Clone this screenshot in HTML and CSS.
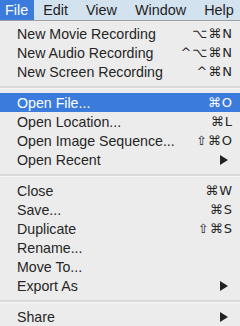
FILE: index.html
```html
<!DOCTYPE html>
<html lang="en">
<head>
    <meta charset="UTF-8">
    <title>File Menu</title>
    <link rel="stylesheet" href="styles.css">
</head>
<body>
    <div class="menubar">
        <span class="bar-item active">File</span>
        <span class="bar-item">Edit</span>
        <span class="bar-item">View</span>
        <span class="bar-item">Window</span>
        <span class="bar-item">Help</span>
    </div>

    <div class="menu">
        <div class="row"><span>New Movie Recording</span><span class="key">⌥⌘N</span></div>
        <div class="row"><span>New Audio Recording</span><span class="key">^⌥⌘N</span></div>
        <div class="row"><span>New Screen Recording</span><span class="key">^⌘N</span></div>

        <div class="sep"></div>

        <div class="row selected"><span>Open File...</span><span class="key">⌘O</span></div>
        <div class="row"><span>Open Location...</span><span class="key">⌘L</span></div>
        <div class="row"><span>Open Image Sequence...</span><span class="key">⇧⌘O</span></div>
        <div class="row"><span>Open Recent</span><span class="arrow"></span></div>

        <div class="sep"></div>

        <div class="row"><span>Close</span><span class="key">⌘W</span></div>
        <div class="row"><span>Save...</span><span class="key">⌘S</span></div>
        <div class="row"><span>Duplicate</span><span class="key">⇧⌘S</span></div>
        <div class="row"><span>Rename...</span></div>
        <div class="row"><span>Move To...</span></div>
        <div class="row"><span>Export As</span><span class="arrow"></span></div>

        <div class="sep"></div>

        <div class="row"><span>Share</span><span class="arrow"></span></div>
    </div>
</body>
</html>
```

FILE: styles.css
```css
* {
    margin: 0;
    padding: 0;
    box-sizing: border-box;
}

body {
    font-family: "Liberation Sans", "DejaVu Sans", Arial, sans-serif;
    font-size: 14.2px;
    color: #262626;
    background: #ececec;
    width: 240px;
    height: 326px;
    overflow: hidden;
}

.menubar {
    display: flex;
    height: 21px;
    background: #d3e2ef;
    border-bottom: 1px solid #9c9fa3;
    white-space: nowrap;
    font-size: 14.4px;
}

.bar-item {
    padding: 0 9px;
    line-height: 20px;
    color: #1e1e1e;
}

.bar-item.active {
    padding: 0 6px 0 5px;
    background: #3a7bdc;
    color: #fff;
}

.bar-item:last-child {
    padding-right: 0;
}

.menu {
    padding-top: 3px;
    background: #ececec;
}

.row {
    display: flex;
    align-items: center;
    justify-content: space-between;
    height: 19px;
    padding: 0 8px 0 17px;
    white-space: nowrap;
}

.row.selected {
    background: #3a7bdc;
    color: #fff;
}

.key {
    font-family: "DejaVu Sans", "Liberation Sans", sans-serif;
    font-size: 13px;
    letter-spacing: 1px;
    margin-right: -1px;
}

.arrow {
    width: 0;
    height: 0;
    margin-right: 4px;
    border-left: 8px solid #222;
    border-top: 5px solid transparent;
    border-bottom: 5px solid transparent;
}

.sep {
    height: 12px;
    display: flex;
    align-items: center;
}

.sep::before {
    content: "";
    flex: 1;
    height: 2px;
    background: #d9d9d9;
    border-bottom: 1px solid #f6f6f6;
}
```
